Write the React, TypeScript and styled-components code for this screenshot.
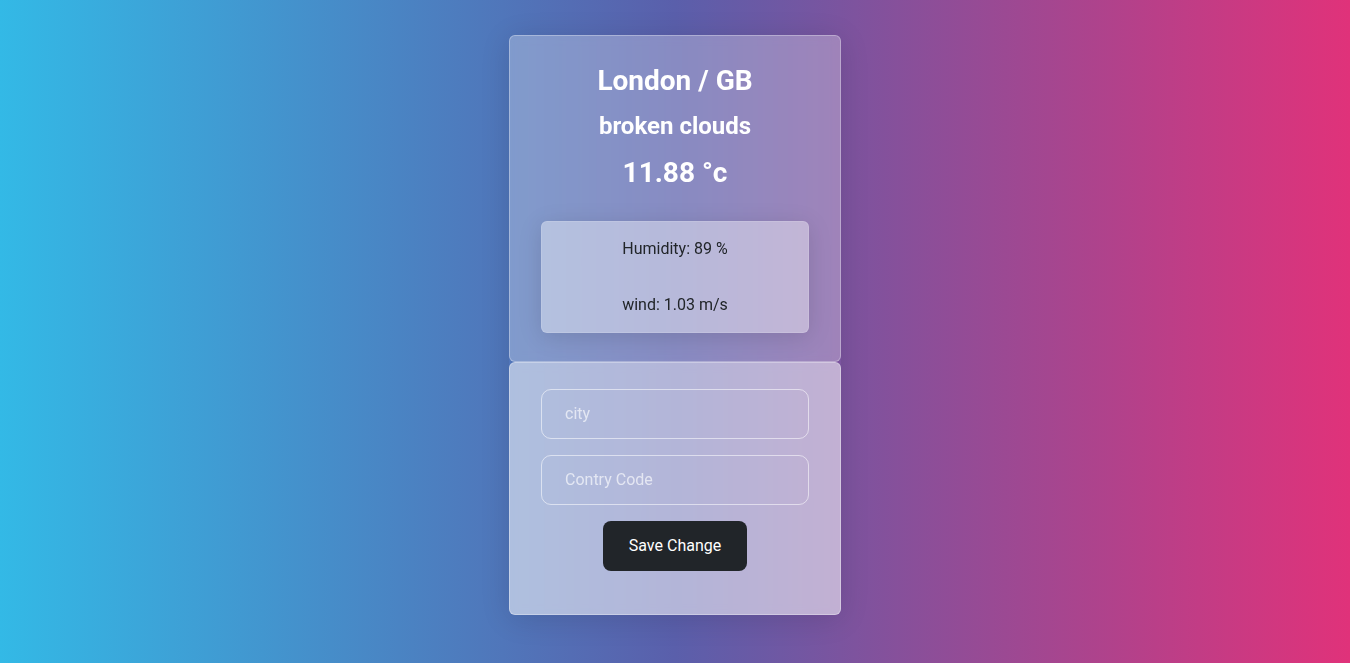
import React from "react";
import styled, { createGlobalStyle } from "styled-components";

const GlobalStyle = createGlobalStyle`
  * { box-sizing: border-box; }
  html, body { margin: 0; padding: 0; height: 100%; }
  body {
    font-family: Roboto, "Liberation Sans", Arial, sans-serif;
    background: linear-gradient(to right, #33b9e6 0%, #5a5fab 50%, #e0327a 100%);
    min-height: 663px;
  }
  #root { min-height: 663px; }
`;

const Page = styled.main`
  display: flex;
  justify-content: center;
  padding-top: 35px;
`;

const Card = styled.div`
  width: 332px;
  display: flex;
  flex-direction: column;
  border-radius: 6px;
  box-shadow: 0 4px 30px rgba(0, 0, 0, 0.12);
`;

const Section = styled.section<{ $alpha: number; $pt: number; $pb: number }>`
  display: flex;
  flex-direction: column;
  align-items: center;
  padding: ${(p) => p.$pt}px 31px ${(p) => p.$pb}px;
  background: rgba(255, 255, 255, ${(p) => p.$alpha});
  border: 1px solid rgba(255, 255, 255, 0.3);
  border-radius: 6px;
  backdrop-filter: blur(5px);
`;

const Heading = styled.h2<{ $size: number; $mb: number }>`
  margin: 0 0 ${(p) => p.$mb}px;
  font-size: ${(p) => p.$size}px;
  line-height: 1.2;
  font-weight: 700;
  color: #fff;
  text-align: center;
`;

const InfoBox = styled.div`
  width: 100%;
  display: flex;
  flex-direction: column;
  align-items: center;
  gap: 32px;
  padding: 15px 0 15px;
  background: rgba(255, 255, 255, 0.4);
  border: 1px solid rgba(255, 255, 255, 0.12);
  border-radius: 6px;
  box-shadow: 0 4px 24px rgba(0, 0, 0, 0.12);
`;

const InfoLine = styled.p`
  margin: 0;
  font-size: 16px;
  line-height: 24px;
  color: #212529;
`;

const Form = styled.form`
  width: 100%;
  display: flex;
  flex-direction: column;
  align-items: center;
  gap: 16px;
`;

const Input = styled.input`
  width: 100%;
  height: 50px;
  padding: 0 23px;
  font-family: Roboto, "Liberation Sans", Arial, sans-serif;
  font-size: 16px;
  color: #fff;
  background: transparent;
  border: 1px solid rgba(255, 255, 255, 0.55);
  border-radius: 10px;
  outline: none;
  &::placeholder { color: rgba(255, 255, 255, 0.65); }
`;

const Button = styled.button`
  height: 50px;
  padding: 0 25.5px;
  font-family: Roboto, "Liberation Sans", Arial, sans-serif;
  font-size: 16px;
  color: #fff;
  background: #212529;
  border: none;
  border-radius: 8px;
  cursor: pointer;
`;

export default function App() {
  return (
    <>
      <GlobalStyle />
      <Page>
        <Card>
          <Section $alpha={0.28} $pt={28} $pb={28}>
            <Heading $size={28} $mb={14}>London / GB</Heading>
            <Heading $size={24} $mb={16}>broken clouds</Heading>
            <Heading $size={28} $mb={31}>11.88 °c</Heading>
            <InfoBox>
              <InfoLine>Humidity: 89 %</InfoLine>
              <InfoLine>wind: 1.03 m/s</InfoLine>
            </InfoBox>
          </Section>
          <Section $alpha={0.54} $pt={26} $pb={43}>
            <Form onSubmit={(e) => e.preventDefault()}>
              <Input placeholder="city" />
              <Input placeholder="Contry Code" />
              <Button type="submit">Save Change</Button>
            </Form>
          </Section>
        </Card>
      </Page>
    </>
  );
}
